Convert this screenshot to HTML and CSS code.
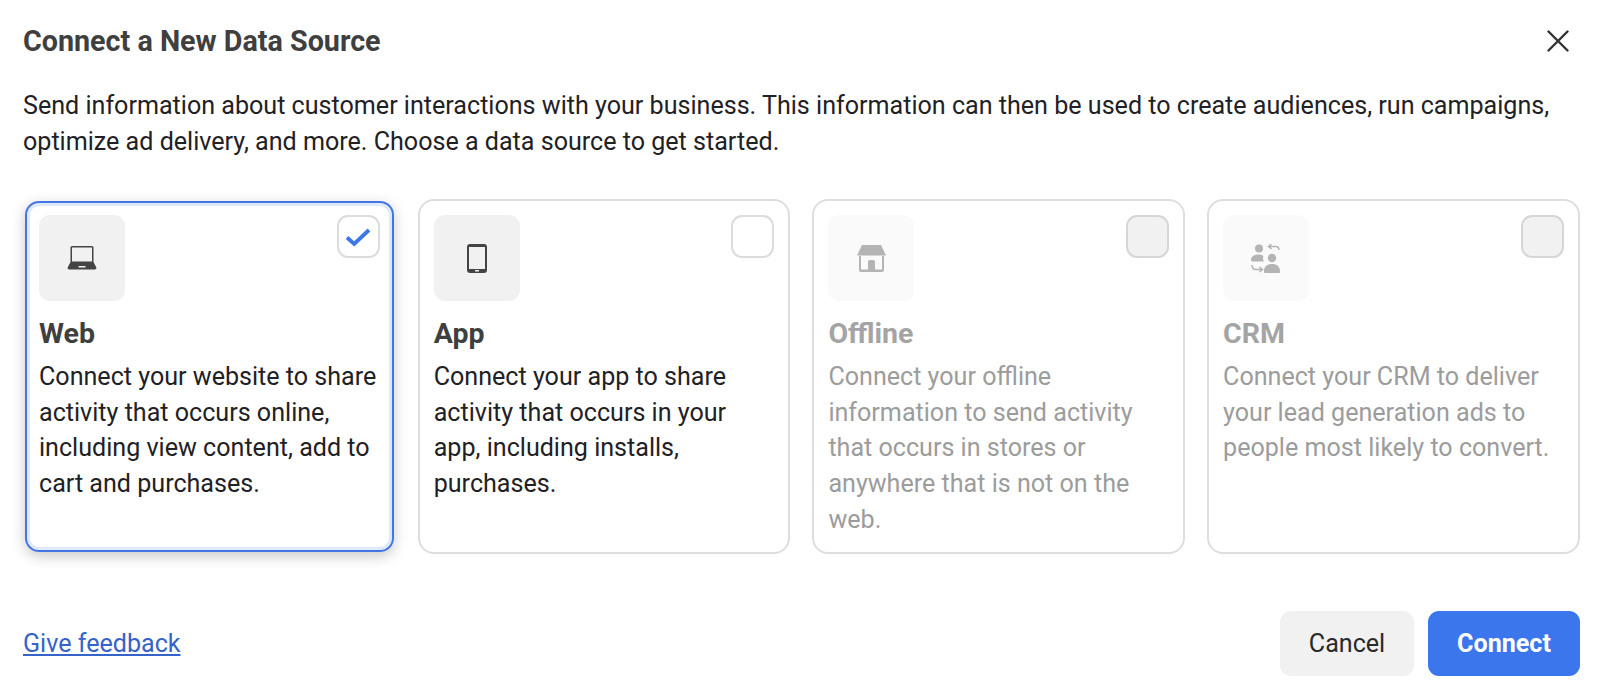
FILE: index.html
```html
<!DOCTYPE html>
<html lang="en">
<head>
<meta charset="utf-8">
<title>Connect a New Data Source</title>
<link rel="stylesheet" href="styles.css">
</head>
<body>
<main class="dialog">
  <header class="head">
    <h1 class="title">Connect a New Data Source</h1>
    <button class="close" aria-label="Close">
      <svg width="22" height="22" viewBox="0 0 22 22"><path d="M1.500 1.500 20.500 20.500M20.500 1.500 1.500 20.500" fill="none" stroke="#333" stroke-width="2.400" stroke-linecap="round"/></svg>
    </button>
  </header>
  <p class="intro">Send information about customer interactions with your business. This information can then be used to create audiences, run campaigns, optimize ad delivery, and more. Choose a data source to get started.</p>
  <section class="cards">
    <article class="card selected">
      <div class="card-top">
        <div class="tile">
          <svg width="30" height="24" viewBox="0 0 30 24"><path fill="#444" fill-rule="evenodd" d="M3.500 1.600A1.600 1.600 0 0 1 5.100 0h19.800a1.600 1.600 0 0 1 1.600 1.600V16l2.700 5.200c.5 1.100 0 2.300-1.300 2.300H2.100C.8 23.500.3 22.300.8 21.200L3.500 16V1.600ZM5 1.500V15.500h20V1.500H5Zm6.500 18.500 0 1.500h7l0-1.500h-7Z"/></svg>
        </div>
        <div class="check">
          <svg width="26" height="20" viewBox="0 0 26 20"><path d="M2 10.500 9.200 17 24 3" fill="none" stroke="#3b76ec" stroke-width="3.800"/></svg>
        </div>
      </div>
      <h2 class="card-title">Web</h2>
      <p class="card-text">Connect your website to share activity that occurs online, including view content, add to cart and purchases.</p>
    </article>
    <article class="card">
      <div class="card-top">
        <div class="tile">
          <svg width="20" height="29" viewBox="0 0 20 29"><path fill="#444" fill-rule="evenodd" d="M3 0h14a3 3 0 0 1 3 3v23a3 3 0 0 1-3 3H3a3 3 0 0 1-3-3V3a3 3 0 0 1 3-3Zm-1 3v22h16V3H2Zm6 23v1.500h4V26H8Z"/></svg>
        </div>
        <div class="check"></div>
      </div>
      <h2 class="card-title">App</h2>
      <p class="card-text">Connect your app to share activity that occurs in your app, including installs, purchases.</p>
    </article>
    <article class="card disabled">
      <div class="card-top">
        <div class="tile">
          <svg width="29" height="27" viewBox="0 0 29 27"><path fill="#b4b4b4" d="M5 0h19l5 10.500H0L5 0Z"/><path fill="#b4b4b4" fill-rule="evenodd" d="M2 11h2v13.500h7V17a2 2 0 0 1 2-2h3a2 2 0 0 1 2 2v7.500h7V11h2v14a2 2 0 0 1-2 2H4a2 2 0 0 1-2-2V11Z"/><path fill="#b4b4b4" d="M11 16h7v11h-7z"/></svg>
        </div>
        <div class="check"></div>
      </div>
      <h2 class="card-title">Offline</h2>
      <p class="card-text">Connect your offline information to send activity that occurs in stores or anywhere that is not on the web.</p>
    </article>
    <article class="card disabled">
      <div class="card-top">
        <div class="tile">
          <svg width="30" height="29" viewBox="0 0 30 29"><g fill="#b4b4b4"><circle cx="8" cy="4.500" r="4"/><path d="M0 16c0-3.500 3-5.500 7.500-5.500 2.500 0 3.500.5 5 1.500-1 2-.5 4 .5 5.500H2c-1.200 0-2-.5-2-1.500Z"/><circle cx="21" cy="14" r="4.200"/><path d="M13 28c-.5-5 3-8 8-8s8.500 3 8 8c0 .5-.5 1-1 1H14c-.5 0-1-.5-1-1Z"/></g><path d="M18 2.500h7c2 0 3 1.200 3 3.500M20.500 0 17.500 2.500l3 2.500M1 21c0 3 1.500 4.500 4 4.500h6M8.500 23l3 2.500-3 2.500" fill="none" stroke="#b4b4b4" stroke-width="1.500"/></svg>
        </div>
        <div class="check"></div>
      </div>
      <h2 class="card-title">CRM</h2>
      <p class="card-text">Connect your CRM to deliver your lead generation ads to people most likely to convert.</p>
    </article>
  </section>
  <footer class="foot">
    <a class="feedback" href="#">Give feedback</a>
    <div class="actions">
      <button class="btn cancel">Cancel</button>
      <button class="btn connect">Connect</button>
    </div>
  </footer>
</main>
</body>
</html>
```
FILE: styles.css
```css
* { box-sizing: border-box; }
html, body { margin: 0; background: #fff; }
body { font-family: Roboto, "Liberation Sans", sans-serif; color: #1f2124; }
.dialog { width: 1600px; height: 687px; padding: 0 20px 11px 23px; display: flex; flex-direction: column; overflow: hidden; }
.head { height: 82px; display: flex; justify-content: space-between; align-items: center; }
.title { margin: 0; font-size: 28.700px; font-weight: 700; color: #3f3f3f; }
.close { width: 22px; height: 22px; padding: 0; border: 0; background: none; display: flex; margin-right: 11px; }
.intro { margin: 0; font-size: 25.100px; line-height: 35.500px; color: #1f2124; height: 117px; padding-top: 6px; }
.cards { display: grid; grid-template-columns: repeat(4, 372.500px); column-gap: 22.200px; height: 355px; }
.card { position: relative; border: 2px solid #dedede; border-radius: 16px; padding: 14px 14px 0; background: #fff; }
.card.selected { border-color: transparent; }
.card.selected::before { content: ""; position: absolute; inset: 0; border: 2px solid #4476e3; border-radius: 14px; box-shadow: 0 4px 14px rgba(0,0,0,.22), inset 0 0 0 3px #dfe9fd; pointer-events: none; }
.card-top { display: flex; justify-content: space-between; align-items: flex-start; }
.tile { width: 86px; height: 86px; border-radius: 11px; background: #f1f1f1; display: flex; align-items: center; justify-content: center; }
.check { width: 43px; height: 43px; border: 2px solid #dcdcdc; border-radius: 11px; background: #fff; display: flex; align-items: center; justify-content: center; }
.card-title { margin: 16px 0 0; font-size: 28.500px; line-height: 33px; font-weight: 700; color: #3f3f3f; }
.card-text { margin: 9px 0 0; font-size: 25.100px; line-height: 35.700px; color: #1f2124; }
.disabled .tile { background: #fafafa; }
.disabled .check { background: #f1f1f1; border-color: #d6d6d6; }
.disabled .card-title { color: #a4a4a4; }
.disabled .card-text { color: #9c9c9c; }
.foot { margin-top: auto; display: flex; justify-content: space-between; align-items: center; }
.feedback { font-size: 25.100px; color: #3563c9; }
.actions { display: flex; gap: 14px; }
.btn { height: 65px; border: 0; border-radius: 11px; font-family: inherit; font-size: 25.100px; }
.cancel { width: 134px; background: #f1f1f1; color: #2a2a2a; }
.connect { width: 152px; background: #3b76ec; color: #fff; font-weight: 700; }
```
